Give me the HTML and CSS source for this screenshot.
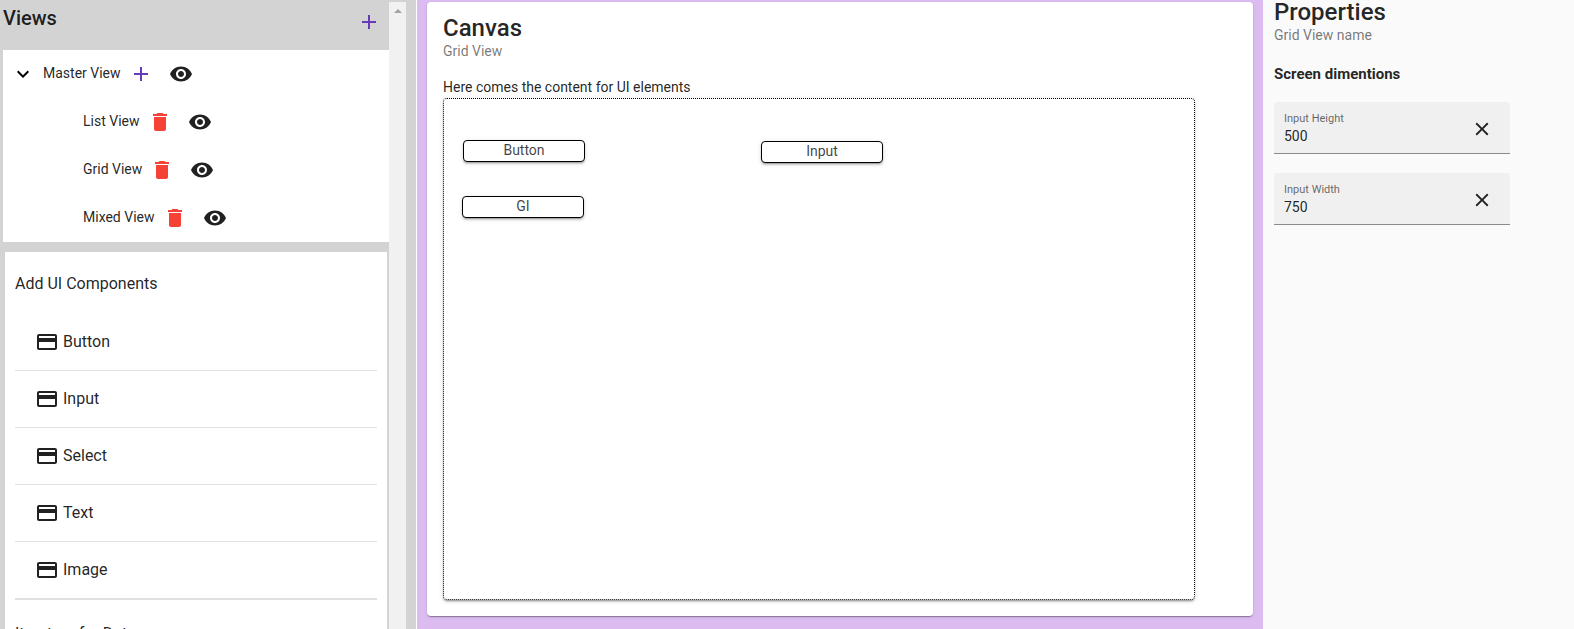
FILE: index.html
```html
<!DOCTYPE html>
<html lang="en">
<head>
<meta charset="utf-8">
<title>UI Builder</title>
<link rel="stylesheet" href="styles.css">
</head>
<body>
<svg class="sprite" aria-hidden="true">
  <symbol id="add" viewBox="0 0 24 24"><path d="M19 13h-6v6h-2v-6H5v-2h6V5h2v6h6v2z"/></symbol>
  <symbol id="expand" viewBox="0 0 24 24"><path d="M16.59 8.59L12 13.17 7.41 8.59 6 10l6 6 6-6z"/></symbol>
  <symbol id="eye" viewBox="0 0 24 24"><path d="M12 4.5C7 4.5 2.73 7.61 1 12c1.73 4.39 6 7.5 11 7.5s9.27-3.11 11-7.5c-1.73-4.39-6-7.5-11-7.5zM12 17c-2.76 0-5-2.24-5-5s2.24-5 5-5 5 2.24 5 5-2.24 5-5 5zm0-8c-1.66 0-3 1.34-3 3s1.34 3 3 3 3-1.34 3-3-1.34-3-3-3z"/></symbol>
  <symbol id="trash" viewBox="0 0 24 24"><path d="M6 19c0 1.1.9 2 2 2h8c1.1 0 2-.9 2-2V7H6v12zM19 4h-3.5l-1-1h-5l-1 1H5v2h14V4z"/></symbol>
  <symbol id="card" viewBox="0 0 24 24"><path d="M20 4H4c-1.11 0-1.99.89-1.99 2L2 18c0 1.11.89 2 2 2h16c1.11 0 2-.89 2-2V6c0-1.11-.89-2-2-2zm0 14H4v-6h16v6zm0-10H4V6h16v2z"/></symbol>
  <symbol id="close" viewBox="0 0 24 24"><path d="M19 6.41L17.59 5 12 10.59 6.41 5 5 6.41 10.59 12 5 17.59 6.41 19 12 13.41 17.59 19 19 17.59 13.41 12z"/></symbol>
</svg>
<div class="app">
  <aside class="sidebar">
    <div class="sidebar-content">
      <header class="views-header">
        <h2 class="views-title">Views</h2>
        <button class="icon-button primary" aria-label="Add master view"><svg class="icon"><use href="#add"/></svg></button>
      </header>
      <ul class="tree">
        <li class="node">
          <button class="icon-button toggle" aria-label="Collapse"><svg class="icon"><use href="#expand"/></svg></button>
          <span class="node-name">Master View</span>
          <button class="icon-button primary" aria-label="Add view"><svg class="icon"><use href="#add"/></svg></button>
          <button class="icon-button" aria-label="Show Master View"><svg class="icon"><use href="#eye"/></svg></button>
        </li>
        <li class="node child">
          <span class="node-name">List View</span>
          <button class="icon-button warn" aria-label="Delete List View"><svg class="icon"><use href="#trash"/></svg></button>
          <button class="icon-button" aria-label="Show List View"><svg class="icon"><use href="#eye"/></svg></button>
        </li>
        <li class="node child">
          <span class="node-name">Grid View</span>
          <button class="icon-button warn" aria-label="Delete Grid View"><svg class="icon"><use href="#trash"/></svg></button>
          <button class="icon-button" aria-label="Show Grid View"><svg class="icon"><use href="#eye"/></svg></button>
        </li>
        <li class="node child">
          <span class="node-name">Mixed View</span>
          <button class="icon-button warn" aria-label="Delete Mixed View"><svg class="icon"><use href="#trash"/></svg></button>
          <button class="icon-button" aria-label="Show Mixed View"><svg class="icon"><use href="#eye"/></svg></button>
        </li>
      </ul>
      <section class="components">
        <h3 class="group-title">Add UI Components</h3>
        <ul class="component-list">
          <li class="component"><svg class="icon"><use href="#card"/></svg>Button</li>
          <li class="component"><svg class="icon"><use href="#card"/></svg>Input</li>
          <li class="component"><svg class="icon"><use href="#card"/></svg>Select</li>
          <li class="component"><svg class="icon"><use href="#card"/></svg>Text</li>
          <li class="component"><svg class="icon"><use href="#card"/></svg>Image</li>
        </ul>
        <h3 class="group-title">Iterators for Data</h3>
      </section>
    </div>
    <div class="scrollbar"><span class="scroll-arrow"></span></div>
  </aside>
  <main class="workspace">
    <section class="card">
      <h1 class="title">Canvas</h1>
      <p class="subtitle">Grid View</p>
      <p class="hint">Here comes the content for UI elements</p>
      <div class="board">
        <button class="element element-button">Button</button>
        <button class="element element-input">Input</button>
        <button class="element element-gi">GI</button>
      </div>
    </section>
  </main>
  <aside class="properties">
    <h1 class="title">Properties</h1>
    <p class="subtitle">Grid View name</p>
    <h4 class="section-title">Screen dimentions</h4>
    <div class="field">
      <div class="field-text">
        <label class="field-label" for="height">Input Height</label>
        <input class="field-input" id="height" type="text" value="500">
      </div>
      <button class="icon-button clear" aria-label="Clear height"><svg class="icon medium"><use href="#close"/></svg></button>
    </div>
    <div class="field">
      <div class="field-text">
        <label class="field-label" for="width">Input Width</label>
        <input class="field-input" id="width" type="text" value="750">
      </div>
      <button class="icon-button clear" aria-label="Clear width"><svg class="icon medium"><use href="#close"/></svg></button>
    </div>
  </aside>
</div>
</body>
</html>
```

FILE: styles.css
```css
* { box-sizing: border-box; }

body {
  margin: 0;
  height: 100vh;
  overflow: hidden;
  background: #fafafa;
  color: rgba(0, 0, 0, 0.87);
  font: 400 14px/20px Roboto, sans-serif;
}

h1, h2, h3, h4, p, ul { margin: 0; padding: 0; }
ul { list-style: none; }

.sprite { display: none; }

.app {
  display: grid;
  grid-template-columns: 416fr 847fr 311fr;
  height: 100%;
}

.icon {
  display: block;
  flex: none;
  width: 24px;
  height: 24px;
  fill: currentColor;
}
.icon.medium { width: 22px; height: 22px; }

.icon-button {
  display: flex;
  align-items: center;
  justify-content: center;
  width: 40px;
  height: 40px;
  padding: 0;
  border: 0;
  background: none;
  color: inherit;
}
.primary { color: #673ab7; }
.warn { color: #f44336; }

/* Sidebar */
.sidebar {
  display: flex;
  min-height: 0;
  overflow: hidden;
  padding-right: 10px;
  background: #d3d3d3;
}
.sidebar-content { flex: 1; }

.views-header {
  display: flex;
  justify-content: space-between;
  height: 50px;
  padding-left: 3px;
}
.views-header .icon-button { margin-top: 2px; }
.views-title { padding-top: 2px; font: 500 20px/32px Roboto, sans-serif; }

.tree { margin-left: 3px; background: #fff; }
.node { display: flex; align-items: center; height: 48px; }
.node-name { padding-bottom: 2px; }
.child { padding-left: 80px; }
.toggle { color: #000; }

.components {
  margin: 10px 2px 0 5px;
  padding: 16px 10px 0;
  background: #fff;
}
.group-title { font: 400 16px/32px Roboto, sans-serif; }
.component-list { margin: 14px 0 18px; border-bottom: 1px solid #e0e0e0; }
.component {
  display: flex;
  align-items: center;
  gap: 4px;
  height: 57px;
  padding-left: 20px;
  border-bottom: 1px solid #e0e0e0;
  font-size: 16px;
}

.scrollbar {
  width: 17px;
  margin-top: 2px;
  padding-top: 7px;
  background: #f1f1f1;
}
.scroll-arrow {
  display: block;
  width: 8px;
  margin: 0 auto;
  border: 4px solid transparent;
  border-top: 0;
  border-bottom-color: #a3a3a3;
}

/* Canvas */
.workspace {
  padding: 2px 10px;
  border-left: 1px solid #fff;
  background: #dcbcf0;
}
.card {
  padding: 16px;
  border-radius: 4px;
  background: #fff;
  box-shadow: 0 2px 1px -1px rgba(0, 0, 0, 0.2), 0 1px 1px rgba(0, 0, 0, 0.14), 0 1px 3px rgba(0, 0, 0, 0.12);
}
.title { font: 500 24px/20px Roboto, sans-serif; }
.subtitle { padding-top: 3px; color: rgba(0, 0, 0, 0.54); }
.hint { padding: 16px 0 1px; }
.board {
  position: relative;
  width: 752px;
  height: 502px;
  border: 1px dotted #000;
  border-radius: 4px;
  box-shadow: 0 3px 1px -2px rgba(0, 0, 0, 0.2), 0 2px 2px rgba(0, 0, 0, 0.14), 0 1px 5px rgba(0, 0, 0, 0.12);
}
.element {
  position: absolute;
  width: 122px;
  height: 22px;
  padding: 0 0 1px;
  border: 1px solid #000;
  border-radius: 4px;
  background: #fff;
  color: rgba(0, 0, 0, 0.75);
  font: inherit;
  line-height: 19px;
  box-shadow: 0 3px 1px -2px rgba(0, 0, 0, 0.2), 0 2px 2px rgba(0, 0, 0, 0.14), 0 1px 5px rgba(0, 0, 0, 0.12);
}
.element-button { left: 19px; top: 41px; }
.element-input { left: 317px; top: 42px; }
.element-gi { left: 18px; top: 97px; }

/* Properties */
.properties { padding: 2px 64px 0 11px; }
.section-title { padding: 19px 0 18px; font: 700 15px/20px Roboto, sans-serif; }
.field {
  display: flex;
  align-items: center;
  height: 52px;
  margin-bottom: 19px;
  padding: 0 8px 0 10px;
  border-bottom: 1px solid #8a8a8a;
  border-radius: 4px 4px 0 0;
  background: #f0f0f0;
}
.field-text { display: flex; flex: 1; flex-direction: column; min-width: 0; }
.field-label { color: rgba(0, 0, 0, 0.6); font-size: 11px; line-height: 16px; }
.field-input {
  width: 100%;
  padding: 0;
  border: 0;
  background: none;
  color: inherit;
  font: inherit;
  line-height: 18px;
}
.clear { padding-top: 3px; }
```
